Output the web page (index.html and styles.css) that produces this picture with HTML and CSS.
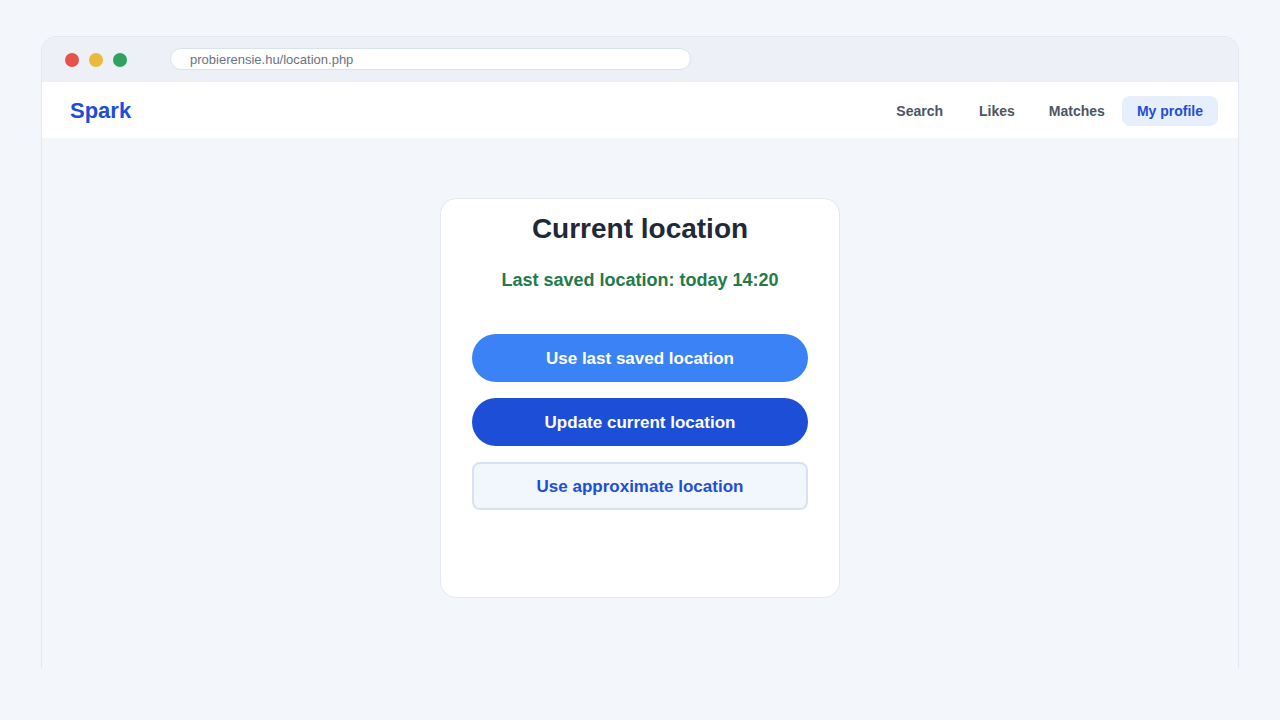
FILE: index.html
```html
<!DOCTYPE html>
<html lang="en">
<head>
    <meta charset="UTF-8">
    <meta name="viewport" content="width=device-width, initial-scale=1.0">
    <title>Spark - Current location</title>
    <link rel="stylesheet" href="styles.css">
</head>
<body>
    <div class="browser">
        <div class="browser-bar">
            <div class="dots">
                <span class="dot red"></span>
                <span class="dot yellow"></span>
                <span class="dot green"></span>
            </div>
            <div class="url">probierensie.hu/location.php</div>
        </div>

        <header class="topnav">
            <a class="logo" href="#">Spark</a>
            <nav class="links">
                <a href="#">Search</a>
                <a href="#">Likes</a>
                <a href="#">Matches</a>
                <a href="#" class="active">My profile</a>
            </nav>
        </header>

        <main class="content">
            <div class="card">
                <h1>Current location</h1>
                <p class="saved">Last saved location: today 14:20</p>
                <div class="actions">
                    <button class="btn btn-light">Use last saved location</button>
                    <button class="btn btn-dark">Update current location</button>
                    <button class="btn btn-outline">Use approximate location</button>
                </div>
            </div>
        </main>
    </div>
</body>
</html>
```

FILE: styles.css
```css
body {
    margin: 0;
    padding: 36px 41px 0;
    background-color: #f3f6fb;
    font-family: "Liberation Sans", Arial, sans-serif;
}

.browser {
    height: 631px;
    border: 1px solid #e3e8f0;
    border-bottom: none;
    border-radius: 16px 16px 0 0;
    overflow: hidden;
    display: flex;
    flex-direction: column;
}

.browser-bar {
    height: 45px;
    background-color: #edf1f7;
    display: flex;
    align-items: center;
    padding-left: 23px;
}

.dots {
    display: flex;
    gap: 10px;
}

.dot {
    width: 14px;
    height: 14px;
    border-radius: 50%;
}

.red { background-color: #e5534b; }
.yellow { background-color: #e9b93b; }
.green { background-color: #2ea25f; }

.url {
    margin: -1px 0 0 43px;
    width: 500px;
    height: 20px;
    line-height: 22px;
    padding-left: 19px;
    background-color: #fff;
    border: 1px solid #d9e2ef;
    border-radius: 11px;
    font-size: 13px;
    color: #6b7280;
}

.topnav {
    height: 56px;
    background-color: #fff;
    display: flex;
    align-items: center;
    justify-content: space-between;
    padding: 0 20px 0 28px;
}

.logo {
    margin-top: 2px;
    font-size: 22px;
    font-weight: bold;
    color: #1d4ed8;
    text-decoration: none;
}

.links {
    display: flex;
    margin-top: 2px;
}

.links a {
    padding: 0 15px;
    height: 30px;
    line-height: 31px;
    border-radius: 8px;
    font-size: 14px;
    font-weight: bold;
    color: #4b5563;
    text-decoration: none;
}

.links a + a {
    margin-left: 4px;
}

.links a:first-child {
    margin-right: 2px;
}

.links a.active {
    margin-left: 2px;
    background-color: #e8effc;
    color: #1d4ed8;
}

.content {
    flex: 1;
    background-color: #f3f6fb;
    display: flex;
    justify-content: center;
    padding-top: 60px;
}

.card {
    width: 336px;
    height: 384px;
    padding: 14px 31px 0;
    background-color: #fff;
    border: 1px solid #e3e8f0;
    border-radius: 16px;
    text-align: center;
}

.card h1 {
    margin: 0;
    font-size: 28px;
    line-height: 32px;
    color: #1f2937;
}

.saved {
    margin: 25px 0 0;
    font-size: 18px;
    line-height: 20px;
    font-weight: bold;
    color: #237a4b;
}

.actions {
    margin-top: 44px;
    display: flex;
    flex-direction: column;
    gap: 16px;
}

.btn {
    height: 48px;
    padding-top: 3px;
    border: none;
    border-radius: 24px;
    font-family: inherit;
    font-size: 17px;
    font-weight: bold;
    color: #fff;
    cursor: pointer;
}

.btn-light {
    background-color: #3b82f6;
}

.btn-dark {
    background-color: #1d4ed8;
}

.btn-outline {
    background-color: #f2f6fd;
    border: 2px solid #d6e1f4;
    border-radius: 8px;
    color: #1d4ed8;
}
```
